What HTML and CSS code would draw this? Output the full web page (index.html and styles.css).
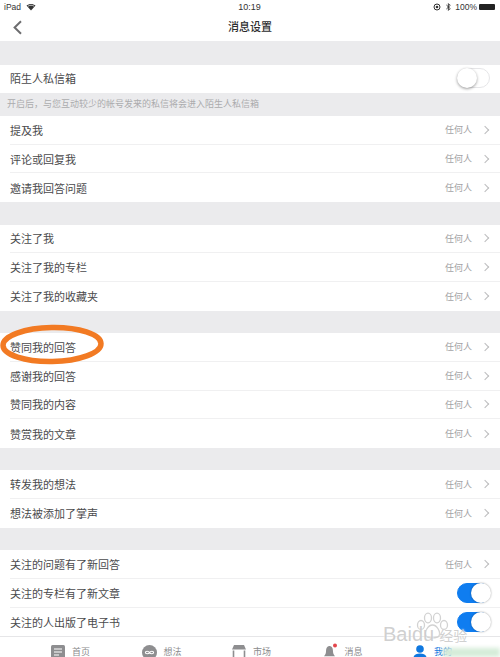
FILE: index.html
```html
<!DOCTYPE html>
<html lang="zh">
<head>
<meta charset="utf-8">
<title>消息设置</title>
<link rel="stylesheet" href="styles.css">
</head>
<body>
<div class="page">
  <div class="status">
    <div class="status-left">iPad
      <svg class="wifi" width="10" height="8" viewBox="0 0 10 8"><path d="M5 7.500 0.500 2.600C3 .4 7 .4 9.500 2.600Z" fill="#333"/><path d="M2 3.200C4 1.900 6 1.900 8 3.200" stroke="#fff" stroke-width=".7" fill="none"/></svg>
    </div>
    <div class="status-time">10:19</div>
    <div class="status-right">
      <svg width="8" height="8" viewBox="0 0 8 8"><circle cx="4" cy="4" r="3" fill="none" stroke="#333" stroke-width="1"/><circle cx="4" cy="4" r="1.300" fill="#333"/></svg>
      <svg class="bt" width="5" height="8" viewBox="0 0 5 8"><path d="M.4 2 4.200 5.600 2.400 7.400V.6L4.200 2.400.4 6" fill="none" stroke="#333" stroke-width=".9"/></svg>
      <span>100%</span>
      <span class="battery"></span>
    </div>
  </div>
  <header class="nav">
    <svg class="back" width="11" height="15" viewBox="0 0 11 15"><path d="M9 1.200 2.600 7.500 9 13.800" fill="none" stroke="#6d6d6f" stroke-width="2"/></svg>
    <h1>消息设置</h1>
  </header>
  <main class="content">
    <section class="group first">
      <div class="row"><span>陌生人私信箱</span><span class="switch"></span></div>
    </section>
    <p class="hint">开启后，与您互动较少的帐号发来的私信将会进入陌生人私信箱</p>
    <section class="group">
      <div class="row"><span>提及我</span><span class="val">任何人<i class="chev"></i></span></div>
      <div class="row"><span>评论或回复我</span><span class="val">任何人<i class="chev"></i></span></div>
      <div class="row"><span>邀请我回答问题</span><span class="val">任何人<i class="chev"></i></span></div>
    </section>
    <section class="group">
      <div class="row"><span>关注了我</span><span class="val">任何人<i class="chev"></i></span></div>
      <div class="row"><span>关注了我的专栏</span><span class="val">任何人<i class="chev"></i></span></div>
      <div class="row"><span>关注了我的收藏夹</span><span class="val">任何人<i class="chev"></i></span></div>
    </section>
    <section class="group">
      <div class="row"><span>赞同我的回答</span><span class="val">任何人<i class="chev"></i></span></div>
      <div class="row"><span>感谢我的回答</span><span class="val">任何人<i class="chev"></i></span></div>
      <div class="row"><span>赞同我的内容</span><span class="val">任何人<i class="chev"></i></span></div>
      <div class="row"><span>赞赏我的文章</span><span class="val">任何人<i class="chev"></i></span></div>
    </section>
    <section class="group">
      <div class="row"><span>转发我的想法</span><span class="val">任何人<i class="chev"></i></span></div>
      <div class="row"><span>想法被添加了掌声</span><span class="val">任何人<i class="chev"></i></span></div>
    </section>
    <section class="group">
      <div class="row"><span>关注的问题有了新回答</span><span class="val">任何人<i class="chev"></i></span></div>
      <div class="row"><span>关注的专栏有了新文章</span><span class="switch on"></span></div>
      <div class="row"><span>关注的人出版了电子书</span><span class="switch on"></span></div>
    </section>
  </main>
  <nav class="tabs">
    <div class="tab">
      <svg width="14" height="14" viewBox="0 0 14 14"><rect width="14" height="14" rx="1.500" fill="#8e8e90"/><path d="M3 4h8M3 7h8M3 10h5" stroke="#fff" stroke-width="1.200"/></svg>
      <span>首页</span>
    </div>
    <div class="tab">
      <svg width="15" height="15" viewBox="0 0 15 15"><circle cx="7.500" cy="7.500" r="7.500" fill="#8e8e90"/><path d="M7.500 7.500C6.500 5.800 3.400 5.800 3.400 7.500S6.500 9.200 7.500 7.500C8.500 5.800 11.600 5.800 11.600 7.500S8.500 9.200 7.500 7.500Z" fill="none" stroke="#fff" stroke-width="1.100"/></svg>
      <span>想法</span>
    </div>
    <div class="tab">
      <svg width="14" height="14" viewBox="0 0 14 14"><path d="M2 0h10l2 4.500H0Z" fill="#8e8e90"/><path d="M1.500 5.500V13h11V5.500" fill="none" stroke="#8e8e90" stroke-width="1.600"/></svg>
      <span>市场</span>
    </div>
    <div class="tab tab-msg">
      <svg width="15" height="17" viewBox="0 0 15 17"><path d="M6 3C3.500 3.500 3 6 3 8.500 3 11 2 12 1 13.200H12C11 12 10 11 10 8.500 10 6 9.500 3.500 7 3Z" fill="#8e8e90"/><rect x="5" y="14" width="3" height="2" fill="#8e8e90"/><circle cx="12" cy="2.500" r="2" fill="#e4464c"/></svg>
      <span>消息</span>
    </div>
    <div class="tab tab-me">
      <svg width="14" height="15" viewBox="0 0 14 15"><circle cx="7" cy="4" r="3.800" fill="#0f78e0"/><path d="M0 15C0 10 3 8.500 7 8.500S14 10 14 15Z" fill="#0f78e0"/></svg>
      <span>我的</span>
    </div>
  </nav>
  <svg class="circle" width="112" height="46" viewBox="0 0 112 46"><ellipse cx="52" cy="22.500" rx="49" ry="17" transform="rotate(-1 52 22.500)" fill="none" stroke="#f27a23" stroke-width="5.500"/></svg>
  <div class="mark">
    <svg class="paw" width="34" height="27" viewBox="0 0 34 27"><g fill="none" stroke="#d2d2d2" stroke-width="1.300"><ellipse cx="6" cy="13" rx="3.500" ry="4.500"/><ellipse cx="13" cy="6" rx="3.500" ry="4.800"/><ellipse cx="22" cy="6" rx="3.500" ry="4.800"/><ellipse cx="29" cy="13" rx="3.500" ry="4.500"/><path d="M17.500 13C13 13 9 20 11 24 13 26.500 22 26.500 24 24 26 20 22 13 17.500 13Z"/></g></svg>
    <div class="mark-text">Baidu<small>经验</small></div>
    <div class="mark-green"></div>
  </div>
</div>
</body>
</html>
```
FILE: styles.css
```css
* { box-sizing: border-box; }
html, body { margin: 0; padding: 0; height: 100%; overflow: hidden; }
body { font-family: "Noto Sans CJK SC", "Liberation Sans", sans-serif; color: #3a3a3c; background: #ebebed; }
.page { position: relative; width: 500px; height: 657px; display: flex; flex-direction: column; overflow: hidden; }
.status { height: 14px; background: #fff; display: grid; grid-template-columns: 1fr auto 1fr; align-items: center; padding: 0 5px 0 4px; font: 8.500px/14px "Liberation Sans", sans-serif; color: #333; }
.status-left { display: flex; align-items: center; gap: 5px; }
.status-time { font-size: 9px; }
.status-right { display: flex; align-items: center; justify-content: flex-end; gap: 4px; }
.status-right .bt { margin-left: 1px; }
.battery { width: 16px; height: 6px; background: #222; border-radius: 1px; margin-left: -2px; }
.nav { height: 27px; background: #fff; position: relative; display: flex; align-items: center; justify-content: center; }
.nav h1 { margin: 0; font-size: 11px; font-weight: 500; color: #2b2b2d; line-height: 25px; padding-bottom: 2px; }
.back { position: absolute; left: 12px; top: 6px; }
.content { height: 595px; flex: none; overflow: hidden; padding-top: 24px; display: flex; flex-direction: column; }
.group { background: #fff; margin-bottom: 22.500px; flex: none; }
.group.first { margin-bottom: 0; }
.group.first .row { height: 28px; padding-bottom: 2px; }
.row { height: 28.700px; margin-left: 10px; padding-right: 10px; display: flex; align-items: center; justify-content: space-between; font-size: 11px; color: #4a4a4c; border-bottom: 1px solid #f0f0f1; }
.row:last-child { border-bottom: 0; }
.hint { margin: 0; height: 23px; flex: none; padding-left: 7px; font-size: 9px; line-height: 22px; color: #ababad; }
.val { display: flex; align-items: center; font-size: 9px; color: #a3a3a5; }
.chev { width: 6px; height: 6px; margin-left: 10px; margin-right: 2px; border-top: 1px solid #bcbcbe; border-right: 1px solid #bcbcbe; transform: rotate(45deg); }
.switch { width: 33px; height: 20px; border-radius: 10px; border: 1px solid #e6e6e8; background: #fff; position: relative; margin-right: 0.500px; }
.switch::after { content: ""; position: absolute; left: -1px; top: -1px; width: 20px; height: 20px; border-radius: 50%; background: #fff; box-shadow: 0 1px 3px rgba(0,0,0,.4); }
.switch.on { background: #0f7df0; border-color: #0f7df0; }
.switch.on::after { left: 13px; box-shadow: 0 0 2px rgba(0,0,0,.4); }
.tabs { height: 21px; flex: none; background: #fff; border-top: 1px solid #e6e6e8; overflow: hidden; display: grid; grid-template-columns: repeat(5, 90.500px); padding: 8px 0 0 51px; }
.tab { display: flex; align-items: flex-start; gap: 7px; font-size: 9px; line-height: 13px; color: #8b8b8d; }
.tab svg { flex: none; }
.tab-msg svg { margin-top: -2px; }
.tab-me { color: #0f78e0; }
.circle { position: absolute; left: 0; top: 322px; }
.mark { position: absolute; left: 383px; top: 612px; width: 117px; height: 45px; pointer-events: none; }
.paw { position: absolute; left: 32px; top: 0; }
.mark-text { position: absolute; left: 0; top: 11px; white-space: nowrap; font: 400 20px/22px "Liberation Sans", "Noto Sans CJK SC", sans-serif; color: rgba(195,195,195,.8); text-shadow: 0 0 2px #fff; }
.mark-text small { font-size: 14px; margin-left: 5px; }
.mark-green { position: absolute; left: 60px; top: 36px; width: 57px; height: 9px; background: #d5ecd8; filter: blur(2px); }
```
